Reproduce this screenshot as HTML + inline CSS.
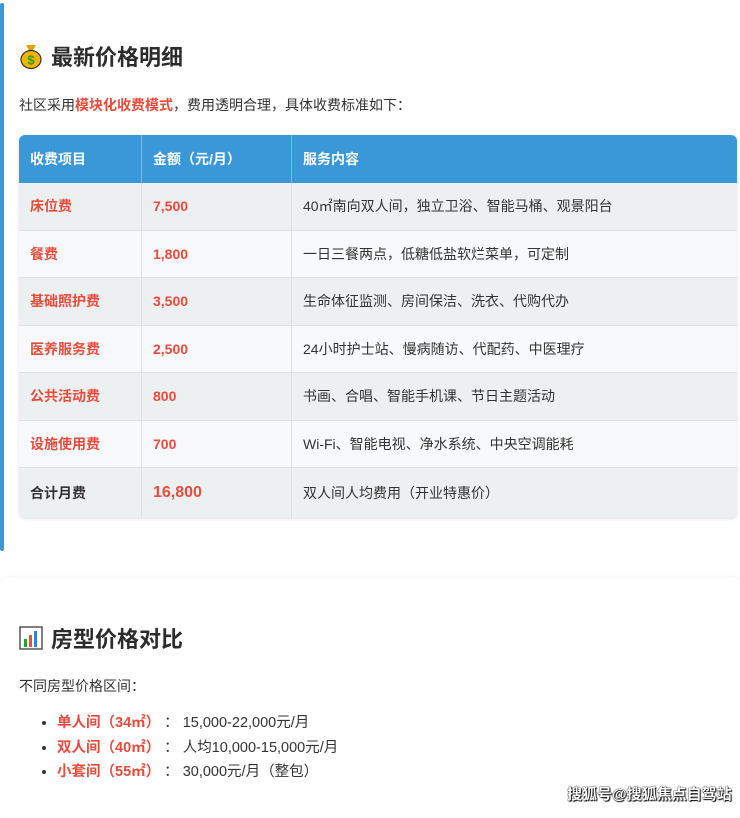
<!DOCTYPE html>
<html><head><meta charset="utf-8"><style>
*{margin:0;padding:0;box-sizing:border-box}
body{width:740px;height:808px;background:#fff;font-family:"Liberation Sans","Noto Sans CJK SC",sans-serif;color:#333;position:relative;overflow:hidden}
.bar{position:absolute;left:0;top:3px;width:4px;height:548px;background:#3a97d8;border-radius:2px}
h2{position:absolute;font-size:22px;font-weight:bold;color:#2c2c2c;display:flex;align-items:center;gap:8px;white-space:nowrap}
.p{position:absolute;font-size:14px;color:#333;white-space:nowrap}
.red{color:#e74c3c;font-weight:bold}
table{position:absolute;left:19px;top:135px;width:718px;border-collapse:separate;border-spacing:0;font-size:14px;border-radius:6px;overflow:hidden;box-shadow:0 1px 3px rgba(0,0,0,.12)}
td,th{border-right:1px solid #dde1e4;border-bottom:1px solid #dde1e4;padding:0 0 0 11px;text-align:left;height:47.5px}
td:last-child,th:last-child{border-right:none}
th{background:#3a97d8;color:#fff;font-weight:bold;height:48px;border-right:1px solid #7ab8e6;border-bottom:none}
th:last-child{border-right:none}
tr:nth-child(even) td{background:#ecf0f1}
tr:nth-child(odd) td{background:#f7f9fa}
td.a{color:#e74c3c;font-weight:bold}
td.n{color:#e74c3c;font-weight:bold}
tr.t td{height:50px;border-bottom:none}
.card2{position:absolute;left:0;top:578px;width:742px;height:240px;border-radius:8px;box-shadow:0 -1px 4px rgba(0,0,0,.06);background:#fff}
ul{position:absolute;left:57px;top:711px;font-size:14.5px;line-height:24.5px;list-style:disc}
li{white-space:nowrap}
.wm{position:absolute;left:567px;top:783px;font-size:15px;font-weight:bold;color:#fff;text-shadow:0 0 1px #000,0 0 1px #000,1px 1px 1px #000;letter-spacing:0}
</style></head><body>
<div class="bar"></div>
<h2 style="left:19px;top:40px"><svg width="24" height="26" viewBox="0 0 24 26"><path d="M7 2 L17 2 L14 7 L10 7Z" fill="#e0a000"/><ellipse cx="12" cy="16.5" rx="10" ry="9" fill="#f5b400" stroke="#333" stroke-width="1.2"/><text x="12" y="21.5" font-size="13" font-weight="bold" text-anchor="middle" fill="#2a9d2a" font-family="Liberation Sans">$</text></svg>最新价格明细</h2>
<div class="p" style="left:19px;top:95px">社区采用<span class="red" style="font-weight:bold">模块化收费模式</span>，费用透明合理，具体收费标准如下：</div>
<table>
<tr><th style="width:123px">收费项目</th><th style="width:150px">金额（元/月）</th><th>服务内容</th></tr>
<tr><td class="a">床位费</td><td class="n">7,500</td><td>40㎡南向双人间，独立卫浴、智能马桶、观景阳台</td></tr>
<tr><td class="a">餐费</td><td class="n">1,800</td><td>一日三餐两点，低糖低盐软烂菜单，可定制</td></tr>
<tr><td class="a">基础照护费</td><td class="n">3,500</td><td>生命体征监测、房间保洁、洗衣、代购代办</td></tr>
<tr><td class="a">医养服务费</td><td class="n">2,500</td><td>24小时护士站、慢病随访、代配药、中医理疗</td></tr>
<tr><td class="a">公共活动费</td><td class="n">800</td><td>书画、合唱、智能手机课、节日主题活动</td></tr>
<tr><td class="a">设施使用费</td><td class="n">700</td><td>Wi-Fi、智能电视、净水系统、中央空调能耗</td></tr>
<tr class="t"><td style="font-weight:bold;color:#333">合计月费</td><td class="n" style="font-size:16px">16,800</td><td>双人间人均费用（开业特惠价）</td></tr>
</table>
<div class="card2"></div>
<h2 style="left:19px;top:622px"><svg width="24" height="24" viewBox="0 0 24 24"><rect x="1" y="1" width="22" height="22" fill="#fff" stroke="#555" stroke-width="1.5"/><rect x="5" y="13" width="3" height="8" fill="#2a9d2a"/><rect x="10" y="9" width="3" height="12" fill="#e74c3c"/><rect x="15" y="5" width="3" height="16" fill="#3a7fd8"/></svg>房型价格对比</h2>
<div class="p" style="left:19px;top:676px">不同房型价格区间：</div>
<ul>
<li><span class="red">单人间（34㎡）</span>&nbsp;：&nbsp;15,000-22,000元/月</li>
<li><span class="red">双人间（40㎡）</span>&nbsp;：&nbsp;人均10,000-15,000元/月</li>
<li><span class="red">小套间（55㎡）</span>&nbsp;：&nbsp;30,000元/月（整包）</li>
</ul>
<div class="wm">搜狐号@搜狐焦点自驾站</div>
</body></html>
